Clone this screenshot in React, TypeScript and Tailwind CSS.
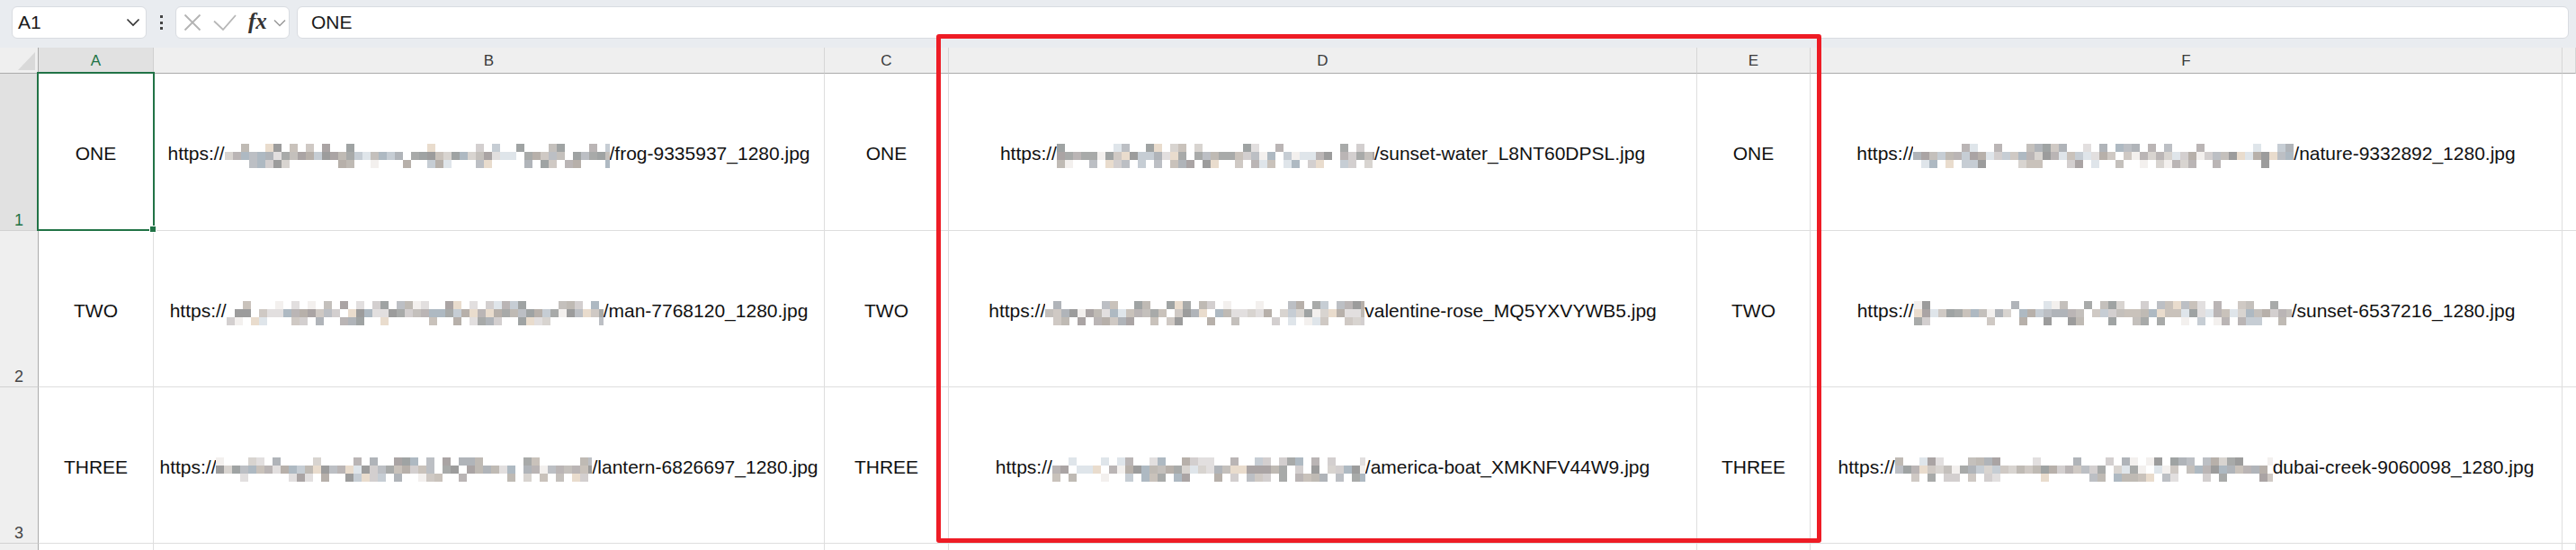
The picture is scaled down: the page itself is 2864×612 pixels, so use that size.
import React from "react";

const font = { fontFamily: '"Liberation Sans", Arial, sans-serif' };

const palette = [
  "#bab5b5", "#c4c0bc", "#a8aaa9", "#d3cfcf", "#e2dfdf", "#b0b4b9", "#c9c2bb",
  "#9fa3a3", "#d8d4d0", "#b7b0aa", "#c6cdd4", "#aeb9c2", "#e9dccd", "#cfc9c4",
  "#9c9c9c", "#bcbfc4", "#f3f0ee", "#dfe5ea", "#bfbab4", "#aaa4a4",
];

function rng(seed: number) {
  let s = seed;
  return () => {
    s |= 0;
    s = (s + 0x6d2b79f5) | 0;
    let t = Math.imul(s ^ (s >>> 15), 1 | s);
    t = (t + Math.imul(t ^ (t >>> 7), 61 | t)) ^ t;
    return ((t ^ (t >>> 14)) >>> 0) / 4294967296;
  };
}

// pixelated blur over the hidden part of the url
const Mosaic = ({ width, seed }: { width: number; seed: number }) => {
  const rand = rng(seed);
  const count = Math.ceil(width / 9);
  const whiteOdds = [0.55, 0.08, 0.5];
  const rows = whiteOdds.map((odds) =>
    Array.from({ length: count }, () =>
      rand() < odds ? "#ffffff" : palette[Math.floor(rand() * palette.length)]
    )
  );
  return (
    <span
      className="flex flex-col overflow-hidden translate-y-[3px] shrink-0"
      style={{ width }}
    >
      {rows.map((row, i) => (
        <span key={i} className="flex">
          {row.map((c, j) => (
            <span key={j} className="w-[9px] h-[9px] shrink-0" style={{ background: c }} />
          ))}
        </span>
      ))}
    </span>
  );
};

type Url = { w: number; s: string };

const UrlCell = ({ url, seed }: { url: Url; seed: number }) => (
  <div className="flex items-center justify-center pt-[3px] border-r border-b border-[#dedede] text-[21px] text-[#111] whitespace-nowrap overflow-visible">
    <span className="flex items-start leading-[27px]">
      <span>https://</span>
      <Mosaic width={url.w} seed={seed} />
      <span>{url.s}</span>
    </span>
  </div>
);

const TextCell = ({ text }: { text: string }) => (
  <div className="flex items-center justify-center pt-[3px] border-r border-b border-[#dedede] text-[21px] text-[#111] leading-[27px]">
    {text}
  </div>
);

const rows = [
  {
    n: 1,
    label: "ONE",
    b: { w: 428, s: "/frog-9335937_1280.jpg" },
    d: { w: 353, s: "/sunset-water_L8NT60DPSL.jpg" },
    f: { w: 423, s: "/nature-9332892_1280.jpg" },
  },
  {
    n: 2,
    label: "TWO",
    b: { w: 419, s: "/man-7768120_1280.jpg" },
    d: { w: 355, s: "valentine-rose_MQ5YXVYWB5.jpg" },
    f: { w: 420, s: "/sunset-6537216_1280.jpg" },
  },
  {
    n: 3,
    label: "THREE",
    b: { w: 418, s: "/lantern-6826697_1280.jpg" },
    d: { w: 348, s: "/america-boat_XMKNFV44W9.jpg" },
    f: { w: 420, s: "dubai-creek-9060098_1280.jpg" },
  },
];

const colLetters = ["A", "B", "C", "D", "E", "F", ""];

const FormulaBar = () => (
  <div className="h-[53px] bg-[#e9ecf0] flex items-start pt-[7px] pl-[13px] pr-[8px] gap-0">
    <div className="w-[150px] h-[36px] bg-white border border-[#d9dce1] rounded-[6px] flex items-center justify-between pl-[6px] pr-[6px] text-[21px] text-[#1a1a1a]">
      <span>A1</span>
      <svg width="16" height="10" viewBox="0 0 16 10" fill="none">
        <path d="M1.5 1.5 L8 8 L14.5 1.5" stroke="#333" strokeWidth="1.6" />
      </svg>
    </div>
    <div className="w-[32px] h-[36px] flex flex-col items-center justify-center gap-[3.5px]">
      <span className="w-[3px] h-[3px] bg-[#444]" />
      <span className="w-[3px] h-[3px] bg-[#444]" />
      <span className="w-[3px] h-[3px] bg-[#444]" />
    </div>
    <div className="w-[127px] h-[36px] bg-white border border-[#d9dce1] rounded-[6px] flex items-center pl-[8px]">
      <svg width="20" height="20" viewBox="0 0 20 20" fill="none">
        <path d="M1.5 1.5 L18.5 18.5 M18.5 1.5 L1.5 18.5" stroke="#b3b3b3" strokeWidth="1.8" />
      </svg>
      <svg width="26" height="20" viewBox="0 0 26 20" fill="none" className="ml-[13px]">
        <path d="M1 8.5 L11 18 L25 2" stroke="#b7b7b7" strokeWidth="1.8" />
      </svg>
      <span
        className="ml-[13px] text-[25px] italic font-bold text-[#333] leading-none -mt-[3px]"
        style={{ fontFamily: '"Liberation Serif", "Times New Roman", serif' }}
      >
        fx
      </span>
      <svg width="14" height="9" viewBox="0 0 14 9" fill="none" className="ml-[7px]">
        <path d="M1 1.5 L7 7.5 L13 1.5" stroke="#999" strokeWidth="1.5" />
      </svg>
    </div>
    <div className="flex-1 ml-[8px] h-[36px] bg-white border border-[#d9dce1] rounded-[6px] flex items-center pl-[15px] text-[21px] text-[#1a1a1a]">
      ONE
    </div>
  </div>
);

export default function App() {
  return (
    <div className="relative w-[2864px] h-[612px] overflow-hidden bg-white" style={font}>
      <FormulaBar />
      <div className="grid grid-cols-[43px_128px_746px_138px_832px_126px_836px_1fr] grid-rows-[29px_175px_174px_174px_1fr] h-[559px]">
        {/* corner */}
        <div className="bg-[#efefef] border-r border-b border-[#ababab] flex items-end justify-end pr-[3px] pb-[3px]">
          <svg width="19" height="20" viewBox="0 0 19 20">
            <path d="M19 0 L19 20 L0 20 Z" fill="#d9d9d9" />
          </svg>
        </div>
        {colLetters.map((l, i) => (
          <div
            key={i}
            className={
              i === 0
                ? "bg-[#e1e1e1] border-r border-b border-r-[#d0d0d0] border-b-[#ababab] flex items-end justify-center pb-[1px] text-[17px] text-[#217346]"
                : "bg-[#efefef] border-r border-b border-r-[#d6d6d6] border-b-[#ababab] flex items-end justify-center pb-[1px] text-[17px] text-[#3a3a3a]"
            }
          >
            {l}
          </div>
        ))}
        {rows.map((r) => (
          <React.Fragment key={r.n}>
            <div
              className={
                r.n === 1
                  ? "bg-[#e1e1e1] border-r border-b border-r-[#ababab] border-b-[#d2d2d2] flex items-end justify-center text-[18px] leading-[22px] text-[#217346]"
                  : "bg-[#efefef] border-r border-b border-r-[#ababab] border-b-[#d2d2d2] flex items-end justify-center text-[18px] leading-[22px] text-[#444]"
              }
            >
              {r.n}
            </div>
            <TextCell text={r.label} />
            <UrlCell url={r.b} seed={r.n * 11 + 1} />
            <TextCell text={r.label} />
            <UrlCell url={r.d} seed={r.n * 11 + 2} />
            <TextCell text={r.label} />
            <UrlCell url={r.f} seed={r.n * 11 + 3} />
            <div className="border-b border-[#dedede]" />
          </React.Fragment>
        ))}
        <div className="bg-[#efefef] border-r border-[#ababab]" />
        {colLetters.map((_, i) => (
          <div key={i} className="border-r border-[#dedede]" />
        ))}
      </div>
      {/* active cell A1 */}
      <div className="absolute left-[41px] top-[80px] w-[131px] h-[177px] border-2 border-[#217346] pointer-events-none">
        <span className="absolute right-[-4px] bottom-[-4px] w-[6px] h-[6px] bg-[#217346] border border-white box-content" />
      </div>
      {/* red annotation box */}
      <div className="absolute left-[1041px] top-[38px] w-[984px] h-[566px] border-[5px] border-[#ee1c25] rounded-[3px] pointer-events-none" />
    </div>
  );
}
